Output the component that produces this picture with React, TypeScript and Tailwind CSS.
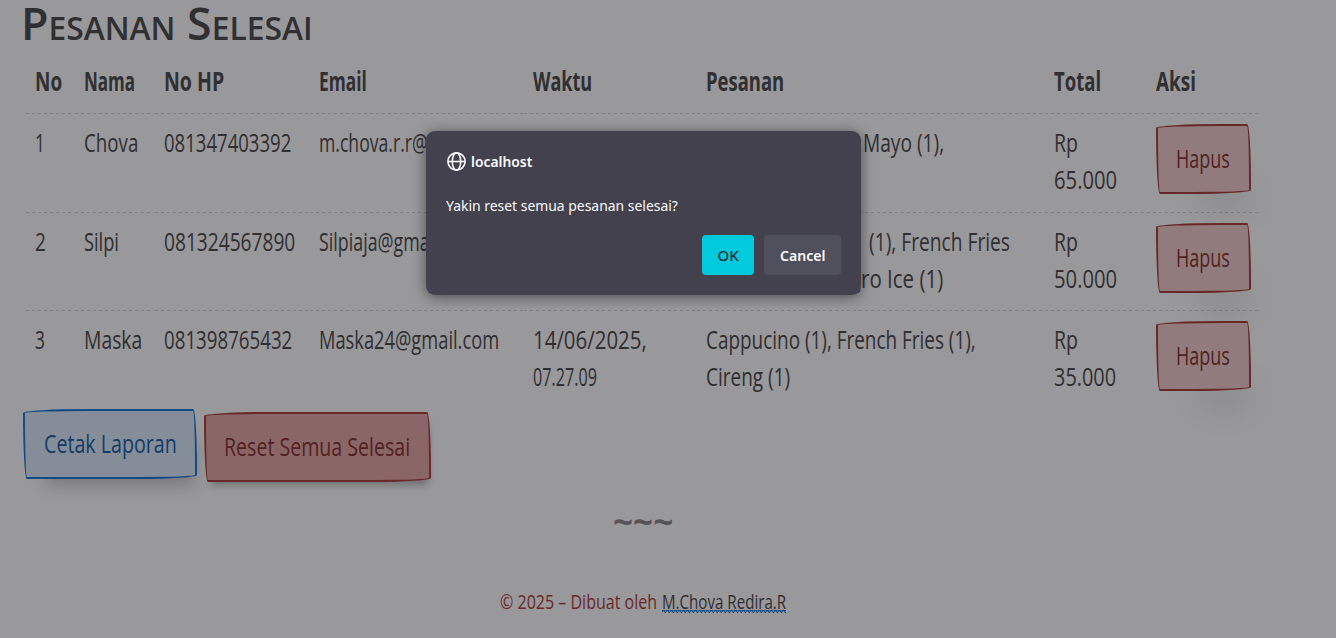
import { useLayoutEffect, useRef, useState } from 'react';
import type { ReactNode } from 'react';

/* Condenses a line of text horizontally so that it spans `w` pixels. */
function Fit({ w, children, className = '' }: { w: number; children: ReactNode; className?: string }) {
  const ref = useRef<HTMLSpanElement>(null);
  const [scale, setScale] = useState(1);
  useLayoutEffect(() => {
    if (ref.current) setScale(w / ref.current.offsetWidth);
  }, [w]);
  return (
    <span className={`inline-block whitespace-nowrap ${className}`} style={{ width: w }}>
      <span ref={ref} className="inline-block origin-left" style={{ transform: `scaleX(${scale})` }}>
        {children}
      </span>
    </span>
  );
}

const sketch =
  'block h-[70px] border-2 text-left rounded-tl-[255px_15px] rounded-tr-[15px_225px] rounded-br-[225px_15px] rounded-bl-[15px_255px]';

type Part = [string, number];
type Row = { no: Part; nama: Part; hp: Part; email: Part; waktu: Part[]; pesanan: Part[][]; total: Part };

const rows: Row[] = [
  {
    no: ['1', 10], nama: ['Chova', 54], hp: ['081347403392', 127], email: ['m.chova.r.r@gmail.com', 193],
    waktu: [['14/06/2025,', 114], ['07.25.41', 63]],
    pesanan: [[['Chicken Katsu', 150], ['Mayo (1),', 81]]],
    total: ['65.000', 63],
  },
  {
    no: ['2', 11], nama: ['Silpi', 35], hp: ['081324567890', 131], email: ['Silpiaja@gmail.com', 160],
    waktu: [['14/06/2025,', 114], ['07.26.30', 63]],
    pesanan: [[['Es Kopi Susu Aren', 156], ['(1), French Fries', 141]], [['(1), Kopi Neg', 155], ['ro Ice (1)', 82]]],
    total: ['50.000', 63],
  },
  {
    no: ['3', 10], nama: ['Maska', 58], hp: ['081398765432', 128], email: ['Maska24@gmail.com', 180],
    waktu: [['14/06/2025,', 114], ['07.27.09', 64]],
    pesanan: [[['Cappucino (1), French Fries (1),', 270]], [['Cireng (1)', 84]]],
    total: ['35.000', 62],
  },
];

const head: Part[] = [
  ['No', 27], ['Nama', 51], ['No HP', 60], ['Email', 48], ['Waktu', 59], ['Pesanan', 78], ['Total', 47], ['Aksi', 40],
];

const dashed =
  'bg-[linear-gradient(90deg,transparent_17%,#d4d4d3_17%,#d4d4d3_67%,transparent_67%)] bg-[length:6px_1px] bg-[position:left_bottom] bg-repeat-x';

function Line({ parts, gap = '' }: { parts: Part[]; gap?: string }) {
  return (
    <div className={`flex ${gap}`}>
      {parts.map(([t, w]) => (
        <Fit key={t} w={w}>{t}</Fit>
      ))}
    </div>
  );
}

export default function App() {
  return (
    <div className="relative h-[638px] w-full overflow-hidden bg-white font-['Open_Sans',sans-serif] text-[26px] leading-[37.4px] text-[#41403e]">
      <main className="pl-[25px]">
        <h1 className="-ml-[4px] h-[61px] text-[45px] leading-[46px] font-semibold [font-variant-caps:small-caps]">
          <Fit w={292}>Pesanan Selesai</Fit>
        </h1>
        <table className="w-[1236px] table-fixed border-separate border-spacing-0">
          <colgroup>
            <col className="w-[49px]" />
            <col className="w-[80px]" />
            <col className="w-[155px]" />
            <col className="w-[214px]" />
            <col className="w-[173px]" />
            <col className="w-[348px]" />
            <col className="w-[102px]" />
            <col className="w-[115px]" />
          </colgroup>
          <thead>
            <tr className="h-[53px] text-left">
              {head.map(([t, w]) => (
                <th key={t} className={`${dashed} px-[10px] pt-[2px] align-top font-bold`}>
                  <Fit w={w}>{t}</Fit>
                </th>
              ))}
            </tr>
          </thead>
          <tbody>
            {rows.map((r, i) => {
              const c = `px-[10px] pt-[10px] align-top ${i === 2 ? '' : dashed}`;
              return (
                <tr key={r.no[0]} className="h-[98.5px]">
                  <td className={c}><Line parts={[r.no]} /></td>
                  <td className={c}><Line parts={[r.nama]} /></td>
                  <td className={c}><Line parts={[r.hp]} /></td>
                  <td className={c}><Line parts={[r.email]} /></td>
                  <td className={c}>{r.waktu.map((p) => <Line key={p[0]} parts={[p]} />)}</td>
                  <td className={c}>
                    {r.pesanan.map((p, j) => <Line key={j} parts={p} gap={j === 0 ? 'gap-[7px]' : 'gap-0'} />)}
                  </td>
                  <td className={c}><Line parts={[['Rp', 24]]} /><Line parts={[r.total]} /></td>
                  <td className={c}>
                    <button className={`${sketch} w-[95px] border-[#a7342d] bg-[#f0cbc9] pl-[18px] text-[#7f2722] shadow-[20px_38px_34px_-26px_rgba(0,0,0,0.2)]`}>
                      <Fit w={54}>Hapus</Fit>
                    </button>
                  </td>
                </tr>
              );
            })}
          </tbody>
        </table>
        <div className="-mt-px -ml-[2px] flex gap-[7px]">
          <button className={`${sketch} w-[174px] border-[#0b72d9] bg-[#dbebfa] pl-[19px] text-[#0a5aa3] shadow-[10px_19px_17px_-13px_rgba(0,0,0,0.25)]`}>
            <Fit w={133}>Cetak Laporan</Fit>
          </button>
          <button className={`${sketch} mt-[3px] w-[227px] border-[#a7342d] bg-[#e6a5a1] pl-[18px] text-[#7f2722] shadow-[2px_8px_8px_-5px_rgba(0,0,0,0.3)]`}>
            <Fit w={186}>Reset Semua Selesai</Fit>
          </button>
        </div>
      </main>
      <div className="mt-[20px] flex h-[38px] justify-center pr-[50px] text-[34px] leading-[38px] font-bold text-[#868482]">
        <Fit w={60}>~~~</Fit>
      </div>
      <footer className="mt-[48px] flex gap-[5px] pl-[500px] text-[20px] leading-[28px] text-[#a7342d]">
        <Fit w={157}>© 2025 – Dibuat oleh</Fit>
        <a className="bg-[linear-gradient(5deg,transparent_65%,#0071de_80%,transparent_90%),linear-gradient(165deg,transparent_5%,#0071de_15%,transparent_25%),linear-gradient(165deg,transparent_45%,#0071de_55%,transparent_65%),linear-gradient(15deg,transparent_25%,#0071de_35%,transparent_50%)] bg-[length:4px_3px] bg-[position:0_22px] bg-repeat-x text-[#41403e] underline decoration-1 underline-offset-2">
          <Fit w={124}>M.Chova Redira.R</Fit>
        </a>
      </footer>

      <div className="absolute inset-0 bg-[rgba(28,27,34,0.45)]" />

      <div className="absolute top-[131px] left-[426px] flex h-[164px] w-[435px] flex-col rounded-[9px] bg-[#42414d] px-5 pt-5 pb-5 font-['Noto_Sans','Open_Sans',sans-serif] text-[15px] leading-[20px] text-[#fbfbfe] shadow-[0_2px_14px_rgba(0,0,0,0.5)]">
        <div className="flex items-center gap-[5px] font-semibold">
          <svg className="ml-[1px] size-[19px]" viewBox="0 0 19 19" fill="none" stroke="currentColor" strokeWidth="1.6">
            <circle cx="9.5" cy="9.5" r="8.6" />
            <ellipse cx="9.5" cy="9.5" rx="4.2" ry="8.6" />
            <path d="M1 9.5h17" />
          </svg>
          <Fit w={61}>localhost</Fit>
        </div>
        <div className="mt-[24px]">
          <Fit w={232}>Yakin reset semua pesanan selesai?</Fit>
        </div>
        <div className="mt-auto flex justify-end gap-[10px] font-semibold">
          <button className="flex h-10 w-[52px] items-center justify-center rounded bg-[#00cadb] font-medium text-[#2b2a33]">
            <Fit w={21}>OK</Fit>
          </button>
          <button className="flex h-10 w-[77px] items-center justify-center rounded bg-[#504f5c]">
            <Fit w={45}>Cancel</Fit>
          </button>
        </div>
      </div>
    </div>
  );
}
